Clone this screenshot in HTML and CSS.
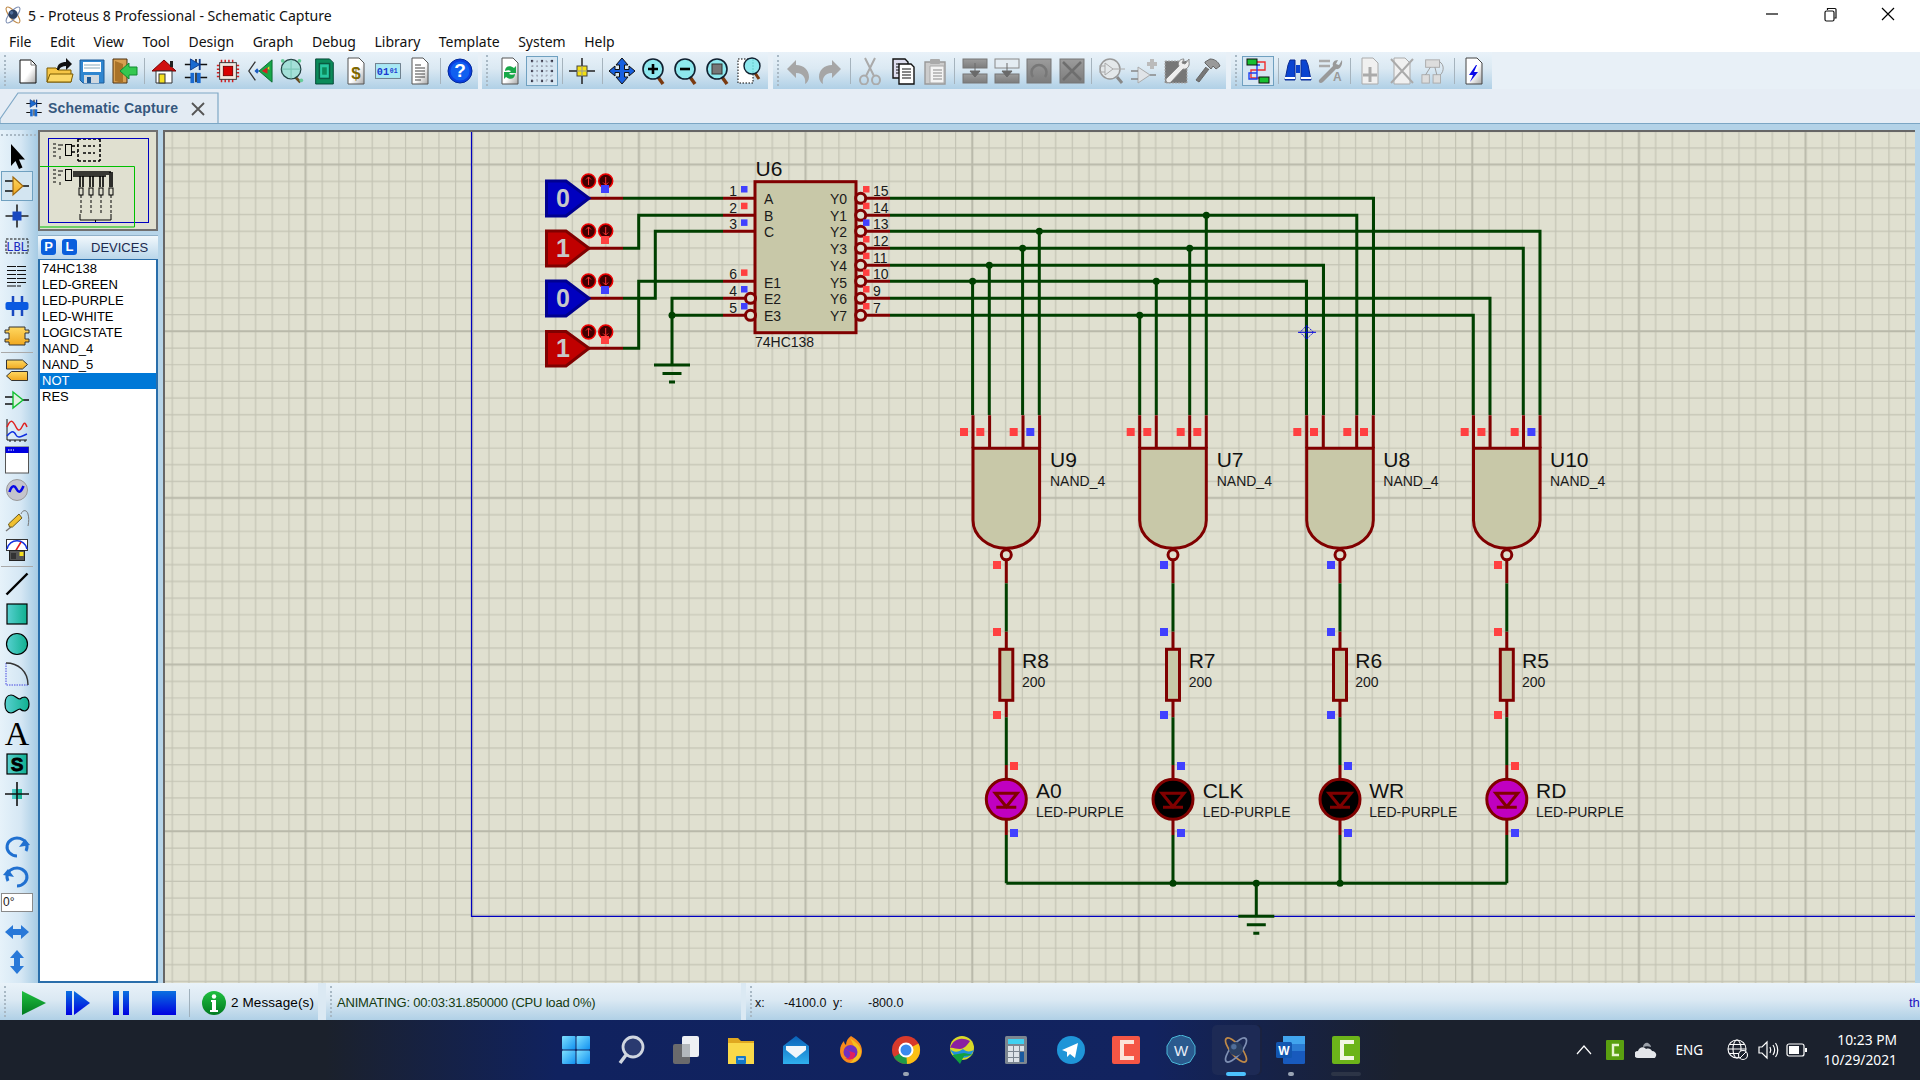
FILE: index.html
```html
<!DOCTYPE html>
<html lang="en">
<head>
<meta charset="utf-8">
<title>5 - Proteus 8 Professional - Schematic Capture</title>
<link rel="stylesheet" href="styles.css">
</head>
<body>
<svg class="defs" width="0" height="0" aria-hidden="true">
  <defs>
    <linearGradient id="docg" x1="0" y1="0" x2="1" y2="1"><stop offset="0.55" stop-color="#fff"/><stop offset="1" stop-color="#a8a8a8"/></linearGradient>
    <linearGradient id="tealg" x1="0" y1="0" x2="1" y2="0"><stop offset="0" stop-color="#58d0d0"/><stop offset="1" stop-color="#10b090"/></linearGradient>
    <linearGradient id="yelg" x1="0" y1="0" x2="0" y2="1"><stop offset="0" stop-color="#ffd860"/><stop offset="1" stop-color="#f0a820"/></linearGradient>
    <linearGradient id="blueg" x1="0" y1="0" x2="0" y2="1"><stop offset="0" stop-color="#0a70e0"/><stop offset="1" stop-color="#0000e0"/></linearGradient>
    <linearGradient id="greeng" x1="0" y1="0" x2="0" y2="1"><stop offset="0" stop-color="#20c040"/><stop offset="1" stop-color="#007a20"/></linearGradient>
    <linearGradient id="grayg" x1="0" y1="0" x2="0" y2="1"><stop offset="0" stop-color="#9c9c9c"/><stop offset="1" stop-color="#7c7c7c"/></linearGradient>
    <linearGradient id="wing" x1="0" y1="0" x2="1" y2="1"><stop offset="0" stop-color="#7fe0ff"/><stop offset="1" stop-color="#1090f0"/></linearGradient>
    <linearGradient id="mailg" x1="0" y1="0" x2="0" y2="1"><stop offset="0" stop-color="#0a62b8"/><stop offset="1" stop-color="#30b0ee"/></linearGradient>
    <symbol id="mag" viewBox="0 0 28 28">
      <path d="M18 20l5 7" stroke="#7a3a10" stroke-width="3.5" fill="none"/>
      <circle cx="13" cy="12" r="10" fill="#8ee8ee" stroke="#102030" stroke-width="1.6"/>
    </symbol>
    <symbol id="schem" viewBox="0 0 28 28">
      <path d="M14 1v8M2 7h8M18 7h8M14 16v10M2 21h8M18 21h8" stroke="#111" stroke-width="1.6" fill="none"/>
      <path d="M8 1l10 6-10 6z" fill="#1a6ad0" stroke="#0a3a90"/>
      <path d="M18 1v12" stroke="#0a3a90" stroke-width="2"/>
      <rect x="8" y="16" width="4" height="11" fill="#1a6ad0"/><rect x="15" y="16" width="4" height="11" fill="#1a6ad0"/>
    </symbol>
    <symbol id="atom" viewBox="0 0 28 28">
      <g fill="none" stroke-width="1.6">
        <ellipse cx="14" cy="14" rx="14" ry="5" transform="rotate(50 14 14)" stroke="#c08a48"/>
        <ellipse cx="14" cy="14" rx="14" ry="5" transform="rotate(-50 14 14)" stroke="#7f90b4"/>
      </g>
      <circle cx="14" cy="13" r="6.5" fill="#2a3e60"/>
      <circle cx="12" cy="11" r="2.5" fill="#506e9a"/>
    </symbol>
  </defs>
</svg>

<div class="app">
  <header class="titlebar">
    <svg class="app-icon" width="20" height="20"><use href="#atom"/></svg>
    <span class="title-text">5 - Proteus 8 Professional - Schematic Capture</span>
    <div class="winctl">
      <svg width="20" height="20" viewBox="0 0 20 20"><path d="M4 10h12" stroke="#000" stroke-width="1.2"/></svg>
      <svg width="20" height="20" viewBox="0 0 20 20"><rect x="5" y="7" width="9" height="10" rx="1.5" fill="none" stroke="#111" stroke-width="1.2"/><path d="M7.5 6V4.5h7.5a1 1 0 0 1 1 1V14h-1.5" fill="none" stroke="#111" stroke-width="1.2"/></svg>
      <svg width="20" height="20" viewBox="0 0 20 20"><path d="M4 4l12 12M16 4L4 16" stroke="#000" stroke-width="1.2"/></svg>
    </div>
  </header>
  <nav class="menubar">
    <span>File</span><span>Edit</span><span>View</span><span>Tool</span><span>Design</span><span>Graph</span><span>Debug</span><span>Library</span><span>Template</span><span>System</span><span>Help</span>
  </nav>

  <div class="toolrow">
    <div class="toolbar tb-a">
      <div class="tb"><svg width="28" height="28" viewBox="0 0 28 28"><path d="M6 3h11l5 5v18H6z" fill="url(#docg)" stroke="#111"/><path d="M17 3v5h5" fill="none" stroke="#777"/></svg></div>
      <div class="tb"><svg width="28" height="28" viewBox="0 0 28 28"><path d="M1 25V11h9l2 2h13v12z" fill="#f6c646" stroke="#7a5a00"/><path d="M1 25l3-8h23l-2 8z" fill="#fbd765" stroke="#7a5a00"/><path d="M11 13c0-6 4-8 9-8V1l6 6-6 6V9c-3 0-6 1-7 4z" fill="#111"/></svg></div>
      <div class="tb"><svg width="28" height="28" viewBox="0 0 28 28"><path d="M2 3h24v23H5l-3-3z" fill="#2f86d0" stroke="#1c5a98"/><rect x="5" y="5" width="18" height="10" fill="#fff"/><path d="M6 8h16M6 11h16" stroke="#8ab" stroke-width="1"/><rect x="6" y="18" width="15" height="8" fill="#cfd8e0"/><rect x="9" y="20" width="4" height="6" fill="#1c5a98"/></svg></div>
      <div class="tb"><svg width="28" height="28" viewBox="0 0 28 28"><path d="M3 2h14v24H3z" fill="#d8a050" stroke="#4c3010"/><path d="M5 4l8 3v19l-8-2z" fill="#a97228"/><path d="M27 10h-8V6l-9 8 9 8v-4h8z" fill="#34c850" stroke="#108a30"/></svg></div>
      <i class="sep"></i>
      <div class="tb"><svg width="28" height="28" viewBox="0 0 28 28"><path d="M2 14L14 3l12 11z" fill="#d01010" stroke="#700"/><rect x="20" y="4" width="3" height="6" fill="#222"/><path d="M6 14h16v12H6z" fill="#fff" stroke="#333"/><rect x="9" y="17" width="6" height="9" fill="#f4e020" stroke="#333"/></svg></div>
      <div class="tb"><svg width="26" height="26"><use href="#schem"/></svg></div>
      <div class="tb"><svg width="26" height="26" viewBox="0 0 28 28"><path d="M7 2v24M11 2v24M15 2v24M19 2v24M2 8h24M2 12h24M2 16h24M2 20h24" stroke="#d02020" stroke-width="1.6"/><rect x="5" y="5" width="18" height="18" fill="#f0e8e0" stroke="#333"/><rect x="9" y="9" width="10" height="10" fill="#d80000" stroke="#700"/></svg></div>
      <div class="tb"><svg width="26" height="26" viewBox="0 0 28 28"><path d="M9 4L2 14l7 10" fill="none" stroke="#333" stroke-width="1.4"/><path d="M8 14l3-3 2 3-2 3z" fill="#1a5ac0"/><path d="M27 2L13 14l14 12z" fill="#18a848" stroke="#0a6a30"/><path d="M22 10l-6 4 6 3z" fill="#d82020"/><path d="M24 9l-2 2 2 2z" fill="#f4e020"/></svg></div>
      <div class="tb"><svg width="26" height="26" viewBox="0 0 28 28"><path d="M18 21l5 5" stroke="#6a4a20" stroke-width="3"/><circle cx="13" cy="12" r="10.500" fill="#a4e0d8" stroke="#204040" stroke-width="1.4"/><path d="M13 2v20M3 12h20" stroke="#7cc8b8" stroke-width="1.2"/><circle cx="22" cy="3" r="2" fill="#6c9"/><circle cx="4" cy="3" r="2" fill="#6c9"/><circle cx="24" cy="24" r="2" fill="#6c9"/></svg></div>
      <div class="tb"><svg width="26" height="28" viewBox="0 0 28 28"><path d="M5 1h15l4 4v23H5z" fill="#0c8a5a" stroke="#043"/><rect x="9" y="6" width="11" height="16" fill="#28c8a0" stroke="#0a5a40" stroke-width="1.6"/><rect x="12" y="10" width="5" height="8" fill="#0c8a5a"/></svg></div>
      <div class="tb"><svg width="28" height="28" viewBox="0 0 28 28"><path d="M6 1h11l5 5v21H6z" fill="url(#docg)" stroke="#555"/><text class="ic-dollar" x="14" y="22" text-anchor="middle">$</text></svg></div>
      <div class="tb"><svg width="26" height="28" viewBox="0 0 28 28"><rect x="0.5" y="6" width="27" height="16" fill="#a8e8f4" stroke="#6a7a88"/><text class="ic-bin" x="2" y="18">01</text><text class="ic-bin-s" x="16" y="16">01</text></svg></div>
      <div class="tb"><svg width="28" height="28" viewBox="0 0 28 28"><path d="M6 1h11l5 5v21H6z" fill="url(#docg)" stroke="#555"/><path d="M9 8h6M9 11h10M9 14h10M9 17h10M9 20h10M9 23h6" stroke="#444" stroke-width="1.2"/></svg></div>
      <i class="sep"></i>
      <div class="tb"><svg width="28" height="28" viewBox="0 0 28 28"><circle cx="14" cy="14" r="12" fill="#0a3ee0" stroke="#002a9a"/><circle cx="14" cy="14" r="9.5" fill="#1060f0"/><text class="ic-help" x="14" y="20" text-anchor="middle">?</text></svg></div>
    </div>
    <div class="toolbar tb-b">
      <div class="tb"><svg width="28" height="28" viewBox="0 0 28 28"><path d="M6 1h11l5 5v21H6z" fill="url(#docg)" stroke="#555"/><path d="M9 14c0-5 5-6 9-3l2-2v7h-7l2-2c-2-1-4-1-6 0zM19 17c0 5-5 6-9 3l-2 2v-7h7l-2 2c2 1 4 1 6 0z" fill="#18a848"/></svg></div>
      <div class="tb on"><svg width="28" height="28" viewBox="0 0 28 28"><g fill="#334"><circle cx="4" cy="4" r="1.2"/><circle cx="14" cy="4" r="1.2"/><circle cx="24" cy="4" r="1.2"/><circle cx="4" cy="14" r="1.2"/><circle cx="14" cy="14" r="1.2"/><circle cx="24" cy="14" r="1.2"/><circle cx="4" cy="24" r="1.2"/><circle cx="14" cy="24" r="1.2"/><circle cx="24" cy="24" r="1.2"/></g><path d="M4 4h20M4 9h20M4 14h20M4 19h20M4 24h20M4 4v20M9 4v20M14 4v20M19 4v20M24 4v20" stroke="#778" stroke-width="0.7" stroke-dasharray="1.5 3"/></svg></div>
      <i class="sep"></i>
      <div class="tb"><svg width="28" height="28" viewBox="0 0 28 28"><path d="M14 1v26M1 14h26" stroke="#222" stroke-width="1.5"/><rect x="9" y="9" width="10" height="10" fill="#f4e010" stroke="#444"/><path d="M9 14h10M14 9v10" stroke="#999"/></svg></div>
      <i class="sep"></i>
      <div class="tb"><svg width="28" height="28" viewBox="0 0 28 28"><path d="M14 1l6 7h-3.500v4.500H21V9l6 5-6 5v-3.500h-4.500V20H20l-6 7-6-7h3.500v-4.500H7V19l-6-5 6-5v3.500h4.500V8H8z" fill="#1860e0" stroke="#111" stroke-width="1"/></svg></div>
      <div class="tb"><svg width="28" height="28"><use href="#mag"/><path d="M8 12h10M13 7v10" stroke="#000" stroke-width="2.6"/></svg></div>
      <div class="tb"><svg width="28" height="28"><use href="#mag"/><path d="M8 12h10" stroke="#000" stroke-width="2.6"/></svg></div>
      <div class="tb"><svg width="28" height="28"><use href="#mag"/><rect x="8" y="7" width="10" height="10" fill="#777" stroke="#333"/></svg></div>
      <div class="tb"><svg width="28" height="28" viewBox="0 0 28 28"><rect x="2" y="2" width="15" height="24" fill="#fff" stroke="#000" stroke-dasharray="1.500 1.500"/><path d="M19 16l4 6" stroke="#7a3a10" stroke-width="3"/><circle cx="16" cy="9" r="8" fill="#8ee8ee" stroke="#102030" stroke-width="1.4"/><path d="M17 2v14" stroke="#6cc" stroke-dasharray="2 1"/></svg></div>
    </div>
    <div class="toolbar tb-c">
      <div class="tb"><svg width="28" height="28" viewBox="0 0 28 28"><path d="M3 12l9-9v5c8 0 13 5 13 12 0 3-2 6-4 7 1-5-1-11-9-11v5z" fill="#a6a6a6"/></svg></div>
      <div class="tb"><svg width="28" height="28" viewBox="0 0 28 28"><path d="M25 12l-9-9v5C8 8 3 13 3 20c0 3 2 6 4 7-1-5 1-11 9-11v5z" fill="#a6a6a6"/></svg></div>
      <i class="sep"></i>
      <div class="tb"><svg width="28" height="28" viewBox="0 0 28 28"><path d="M9 1l9 18M19 1l-9 18" stroke="#aaa" stroke-width="2"/><ellipse cx="8" cy="23" rx="4" ry="4.500" fill="none" stroke="#aaa" stroke-width="2"/><ellipse cx="20" cy="23" rx="4" ry="4.500" fill="none" stroke="#aaa" stroke-width="2"/></svg></div>
      <div class="tb"><svg width="28" height="28" viewBox="0 0 28 28"><path d="M4 2h12l3 3v16H4z" fill="#dde" stroke="#111" stroke-width="1.4"/><path d="M10 7h12l3 3v17H10z" fill="#fff" stroke="#111" stroke-width="1.4"/><path d="M13 12h9M13 15h9M13 18h9M13 21h9" stroke="#111" stroke-width="1.2"/><path d="M7 7h3M7 10h3M7 13h3M7 16h3" stroke="#111"/></svg></div>
      <div class="tb"><svg width="28" height="28" viewBox="0 0 28 28"><path d="M4 5h20v22H4z" fill="#ccc" stroke="#999" stroke-width="1.4"/><rect x="9" y="2" width="10" height="5" rx="1" fill="#aaa"/><path d="M9 9h14v17H9z" fill="#f4f4f4" stroke="#aaa"/><path d="M12 13h9M12 16h9M12 19h9M12 22h9" stroke="#888" stroke-width="1.2"/></svg></div>
      <i class="sep"></i>
      <div class="tb"><svg width="28" height="28" viewBox="0 0 28 28"><rect x="2" y="2" width="24" height="9" fill="url(#grayg)" stroke="#777"/><rect x="2" y="17" width="24" height="9" fill="url(#grayg)" stroke="#777"/><path d="M14 6v12M9 14l5 6 5-6z" fill="#6a6a6a" stroke="#6a6a6a"/></svg></div>
      <div class="tb"><svg width="28" height="28" viewBox="0 0 28 28"><rect x="2" y="2" width="24" height="9" fill="#e4ecf2" stroke="#888"/><rect x="2" y="17" width="24" height="9" fill="url(#grayg)" stroke="#777"/><path d="M14 6v12M9 14l5 6 5-6z" fill="#6a6a6a" stroke="#6a6a6a"/></svg></div>
      <div class="tb"><svg width="28" height="28" viewBox="0 0 28 28"><rect x="2" y="2" width="24" height="24" fill="url(#grayg)" stroke="#777"/><path d="M8 20a7.500 7.500 0 1 1 12 0" fill="none" stroke="#777" stroke-width="2.500"/></svg></div>
      <div class="tb"><svg width="28" height="28" viewBox="0 0 28 28"><rect x="2" y="2" width="24" height="24" fill="url(#grayg)" stroke="#777"/><path d="M5 5l18 18M23 5L5 23" stroke="#6e6e6e" stroke-width="2.500"/></svg></div>
      <i class="sep"></i>
      <div class="tb"><svg width="28" height="28" viewBox="0 0 28 28"><path d="M19 20l5 6" stroke="#888" stroke-width="3"/><circle cx="12" cy="12" r="10" fill="#e4e8ea" stroke="#999" stroke-width="1.500"/><path d="M7 6l8 6-8 6zM1 9h6M1 15h6M15 12h12" fill="none" stroke="#aaa"/></svg></div>
      <div class="tb"><svg width="28" height="28" viewBox="0 0 28 28"><path d="M8 10l12 8-12 8z" fill="#e0e4e8" stroke="#aaa"/><path d="M1 14h7M1 22h7M20 18h6" stroke="#888" stroke-width="1.600"/><path d="M17 7h10M22 2v10" stroke="#bbb" stroke-width="4"/></svg></div>
      <div class="tb"><svg width="28" height="28" viewBox="0 0 28 28"><rect x="3" y="4" width="22" height="22" fill="#777" stroke="#aaa" stroke-dasharray="2 1"/><path d="M27 2l-4 5-3-1 2-4c-4 0-7 3-5 7L4 22c-1 3 3 5 5 3l12-13c4 1 7-3 6-7z" fill="#eee" stroke="#888"/></svg></div>
      <div class="tb"><svg width="28" height="28" viewBox="0 0 28 28"><path d="M15 12L5 25l-3-2 10-13" fill="#777" stroke="#666"/><path d="M11 5l5-3c4 0 8 2 10 7l-4 3-3-3-2 3-6-6z" fill="#999" stroke="#666"/></svg></div>
    </div>
    <div class="toolbar tb-d">
      <div class="tb on"><svg width="28" height="28" viewBox="0 0 28 28"><path d="M12 5h9v8H7v8h9" fill="none" stroke="#f03030" stroke-width="1.400"/><path d="M16 8h-3v14h-8v-6h8" fill="none" stroke="#2040f0" stroke-width="1.400"/><rect x="3" y="2" width="10" height="6" fill="#18c030" stroke="#111"/><rect x="15" y="20" width="10" height="6" fill="#18c030" stroke="#111"/></svg></div>
      <i class="sep"></i>
      <div class="tb"><svg width="28" height="28" viewBox="0 0 28 28"><path d="M4 8l2-5h5v20H1z M24 8l-2-5h-5v20h10z" fill="#0a44d0" stroke="#0a2a90"/><rect x="1" y="20" width="10" height="2" fill="#fff"/><rect x="17" y="20" width="10" height="2" fill="#fff"/><rect x="12" y="8" width="4" height="8" fill="#0a44d0"/></svg></div>
      <div class="tb"><svg width="28" height="28" viewBox="0 0 28 28"><path d="M3 4h11M3 9h11" stroke="#aaa" stroke-width="2.500"/><path d="M26 3l-3 5-3-1 2-4c-4 0-6 3-5 6L3 23c-1 3 2 4 4 2L20 12c3 1 7-3 6-9z" fill="#999"/><text class="ic-a" x="17" y="24">A</text></svg></div>
      <i class="sep"></i>
      <div class="tb"><svg width="28" height="28" viewBox="0 0 28 28"><path d="M6 1h11l5 5v21H6z" fill="#f0f0f0" stroke="#aaa"/><path d="M14 10v15M7 18h14" stroke="#aaa" stroke-width="3"/></svg></div>
      <div class="tb"><svg width="28" height="28" viewBox="0 0 28 28"><path d="M6 1h11l5 5v21H6z" fill="#f0f0f0" stroke="#aaa"/><path d="M3 2l22 24M25 2L3 26" stroke="#aaa" stroke-width="2"/></svg></div>
      <div class="tb"><svg width="26" height="28" viewBox="0 0 28 28"><rect x="5" y="2" width="15" height="8" fill="#ddd" stroke="#aaa"/><rect x="1" y="18" width="8" height="9" fill="#ddd" stroke="#aaa"/><rect x="13" y="18" width="8" height="9" fill="#ddd" stroke="#aaa"/><path d="M10 10l-5 8M15 10l2 8M20 4c5 3 5 10 1 14" fill="none" stroke="#999"/></svg></div>
      <i class="sep"></i>
      <div class="tb"><svg width="28" height="28" viewBox="0 0 28 28"><path d="M6 1h11l5 5v21H6z" fill="url(#docg)" stroke="#444"/><path d="M16 8l-7 10h4l-3 7 8-10h-4l3-7z" fill="#0808e8"/></svg></div>
    </div>
  </div>

  <div class="tabstrip">
    <div class="tab">
      <svg class="tab-shape" width="220" height="32" viewBox="0 0 220 32"><path d="M0 31V27L18 1H218V31" fill="#e3ebf3" stroke="#7fa8c6" stroke-width="1.200"/></svg>
      <svg class="tab-icon" width="18" height="22"><use href="#schem"/></svg>
      <span class="tab-text">Schematic Capture</span>
      <svg class="tab-x" width="16" height="16" viewBox="0 0 16 16"><path d="M2 2l12 12M14 2L2 14" stroke="#555" stroke-width="1.800"/></svg>
    </div>
  </div>
  <div class="tabline"></div>

  <main class="workspace">
    <aside class="tools">
      <div class="tool"><svg width="30" height="30" viewBox="0 0 30 30"><path d="M9 3v22l4.500-5 3.500 8 3.500-1.500-3.500-8h6z" fill="#000"/></svg></div>
      <div class="tool on"><svg width="30" height="30" viewBox="0 0 30 30"><path d="M3 10h8M3 20h8M21 15h6" stroke="#111" stroke-width="1.400"/><path d="M11 6l10 9-10 9z" fill="url(#yelg)" stroke="#a06810" stroke-width="1.200"/></svg></div>
      <div class="tool"><svg width="30" height="30" viewBox="0 0 30 30"><path d="M15 3.500v23M3.500 15h23" stroke="#222" stroke-width="1.600"/><rect x="10.500" y="10.500" width="9" height="9" fill="#1848c0"/></svg></div>
      <div class="tool"><svg width="30" height="30" viewBox="0 0 30 30"><rect x="4" y="8" width="22" height="14" fill="none" stroke="#111" stroke-dasharray="2.500 1.500"/><text class="ic-lbl" x="15" y="19.500" text-anchor="middle">LBL</text></svg></div>
      <div class="tool"><svg width="30" height="30" viewBox="0 0 30 30"><path d="M5 5.500h20M5 9.500h20M5 13.500h20M5 17.500h20M5 21.500h20M5 25h14" stroke="#111" stroke-width="1.200" stroke-dasharray="9 1"/></svg></div>
      <div class="tool"><svg width="30" height="30" viewBox="0 0 30 30"><path d="M11 5v6M20 5v6M11 19v6M20 19v6" stroke="#1848c0" stroke-width="2.500"/><rect x="3.500" y="11" width="23" height="8" rx="2" fill="#0a5ae0"/></svg></div>
      <div class="tool"><svg width="30" height="30" viewBox="0 0 30 30"><path d="M7 6h16v3h4v3h-4v6h4v3h-4v3H7v-3H3v-3h4v-6H3V9h4z" fill="url(#yelg)" stroke="#333"/></svg></div>
      <hr class="tool-sep">
      <div class="tool"><svg width="30" height="30" viewBox="0 0 30 30"><path d="M4.500 5h16l5 4.500-5 4.500h-16z" fill="url(#yelg)" stroke="#333"/><path d="M25.500 16.500h-16l-5 4.500 5 4.500h16z" fill="url(#yelg)" stroke="#333"/></svg></div>
      <div class="tool"><svg width="30" height="30" viewBox="0 0 30 30"><path d="M3 12h8M3 19h8M20 15h7" stroke="#111" stroke-width="1.400"/><path d="M11 7l10 8-10 8z" fill="#dff0e0" stroke="#10c030" stroke-width="1.400"/></svg></div>
      <div class="tool"><svg width="30" height="30" viewBox="0 0 30 30"><path d="M5 4v21h20M8 25v2M13 25v2M18 25v2M23 25v2" stroke="#111" fill="none"/><path d="M5 12c4-9 6-6 9 0s5 2 7-2 3 0 4 2" stroke="#e02020" fill="none" stroke-width="1.500"/><path d="M5 21c5-6 7-5 9-1s6 1 11-1" stroke="#1030e0" fill="none" stroke-width="1.500"/></svg></div>
      <div class="tool"><svg width="30" height="30" viewBox="0 0 30 30"><rect x="3.500" y="2" width="23" height="26" fill="#fff" stroke="#555"/><rect x="3.500" y="2" width="23" height="6" fill="#0000e0"/><path d="M6 5h6" stroke="#fff" stroke-dasharray="1.500 1"/></svg></div>
      <div class="tool"><svg width="30" height="30" viewBox="0 0 30 30"><circle cx="15" cy="15" r="10.500" fill="#c4c4cc" stroke="#999"/><path d="M7.500 17c2-7 5-7 7-3s4 4 7-3" fill="none" stroke="#0808e8" stroke-width="2.600"/></svg></div>
      <div class="tool"><svg width="30" height="30" viewBox="0 0 30 30"><path d="M4 26l5-4" stroke="#777" stroke-width="1.500"/><path d="M7.500 22l-1-3L17 9l3 4-9.500 9z" fill="#f0c030" stroke="#6a5a20"/><path d="M19 9c2-5 6-4 7 0s1 7 0 12" fill="none" stroke="#777"/></svg></div>
      <div class="tool"><svg width="30" height="30" viewBox="0 0 30 30"><rect x="4.500" y="4.500" width="21" height="11" fill="#fff" stroke="#333"/><path d="M5 14c2-11 18-11 20 0" fill="none" stroke="#1030e0" stroke-width="1.500"/><path d="M13 17l6-10" stroke="#e02020" stroke-width="1.500"/><rect x="7.500" y="15.500" width="15" height="10" fill="#555" stroke="#222"/><rect x="9" y="18" width="5" height="6" fill="#333"/><rect x="17.500" y="17" width="4" height="4" fill="#f4e020"/></svg></div>
      <hr class="tool-sep">
      <div class="tool"><svg width="30" height="30" viewBox="0 0 30 30"><path d="M4.500 25.500L25.500 4.500" stroke="#000" stroke-width="2.400"/></svg></div>
      <div class="tool"><svg width="30" height="30" viewBox="0 0 30 30"><rect x="5" y="5" width="20" height="20" fill="url(#tealg)" stroke="#000" stroke-width="1.200"/></svg></div>
      <div class="tool"><svg width="30" height="30" viewBox="0 0 30 30"><circle cx="15" cy="15" r="10.500" fill="url(#tealg)" stroke="#000" stroke-width="1.200"/></svg></div>
      <div class="tool"><svg width="30" height="30" viewBox="0 0 30 30"><path d="M4 4v22h22" fill="none" stroke="#4848e0" stroke-dasharray="1.500 1"/><path d="M4 4c12 0 22 8 22 22" fill="none" stroke="#333" stroke-width="1.400"/></svg></div>
      <div class="tool"><svg width="30" height="30" viewBox="0 0 30 30"><path d="M9 6c4 0 6 4 9 4 2-2 3-2 5-2 3 1 4 4 4 7s-1 6-4 7c-2 0-3 0-5-2-3 0-5 4-9 4s-6-4-6-9 2-9 6-9z" fill="url(#tealg)" stroke="#000" stroke-width="1.200"/></svg></div>
      <div class="tool"><span class="tool-a">A</span></div>
      <div class="tool"><svg width="30" height="30" viewBox="0 0 30 30"><rect x="5" y="5" width="20" height="20" fill="url(#tealg)" stroke="#000" stroke-width="1.200"/><text class="ic-s" x="15" y="22" text-anchor="middle">S</text></svg></div>
      <div class="tool"><svg width="30" height="30" viewBox="0 0 30 30"><rect x="10" y="10" width="10" height="10" fill="url(#tealg)"/><path d="M15 3v24M3 15h24" stroke="#111" stroke-width="1.600"/></svg></div>
      <div class="tool tool-gap"><svg width="30" height="30" viewBox="0 0 30 30"><path d="M24 20a10 9 0 1 0-9 5" fill="none" stroke="#2070d0" stroke-width="3"/><path d="M18 10l5 6 6-8z" fill="#2070d0" transform="rotate(180 23 12)"/></svg></div>
      <div class="tool"><svg width="30" height="30" viewBox="0 0 30 30"><path d="M6 20a10 9 0 1 1 9 5" fill="none" stroke="#2070d0" stroke-width="3"/><path d="M2 8l6 8 5-6z" fill="#2070d0" transform="rotate(180 7 12)"/></svg></div>
      <div class="angle">0°</div>
      <div class="tool"><svg width="30" height="30" viewBox="0 0 30 30"><path d="M3 15l8-7v4h8V8l8 7-8 7v-4h-8v4z" fill="#2878d8"/></svg></div>
      <div class="tool"><svg width="30" height="30" viewBox="0 0 30 30"><path d="M15 3l7 8h-4v8h4l-7 8-7-8h4v-8H8z" fill="#2878d8"/></svg></div>
    </aside>

    <div class="sidepanel">
      <div class="overview">
        <svg width="116" height="97" viewBox="40 132 116 97">
          <g class="ov-ink">
            <path d="M53 144h3M53 148h3M53 152h3M53 156h3M58 145h5M58 149h3M60 156v3"/>
            <path class="thick dash" d="M78 139h22M78 161h22M78 139v22M100 139v22"/>
            <rect x="65.500" y="144.500" width="6" height="11"/>
            <path class="thick dash" d="M83 146h12M83 153h12M72 146h6M72 152h6"/>
            <path d="M53 170h3M53 174h3M53 178h3M53 182h3M58 171h5M58 175h3M60 182v3"/>
            <rect x="65.500" y="169.500" width="6" height="11"/>
            <path class="thick" d="M73 172h38M73 174h36M73 176h33M80 176v11M83 176v11M90 176v11M93 176v11M100 176v11M103 176v11M110 172v15M112 172v15"/>
            <rect x="79" y="188" width="4" height="7"/><rect x="89" y="188" width="4" height="7"/><rect x="99" y="188" width="4" height="7"/><rect x="109" y="188" width="4" height="7"/>
            <path class="dash" d="M81 195v19M91 195v19M101 195v19M111 195v19"/>
            <path d="M80 214v6h31v-6M95.500 220v2"/>
          </g>
          <rect class="ov-blue" x="48.500" y="138.500" width="100" height="84"/>
          <path class="ov-green" d="M40 166.500H134.500V227H40"/>
        </svg>
      </div>
      <div class="devhead">
        <span class="pill">P</span><span class="pill">L</span><span class="devtitle">DEVICES</span>
      </div>
      <ul class="devlist">
        <li>74HC138</li><li>LED-GREEN</li><li>LED-PURPLE</li><li>LED-WHITE</li><li>LOGICSTATE</li><li>NAND_4</li><li>NAND_5</li><li class="sel">NOT</li><li>RES</li>
      </ul>
    </div>

    <div class="canvas-wrap">
      <svg class="canvas" viewBox="165 132 1750 851" width="1750" height="851">
        <defs>
          <pattern id="grid" patternUnits="userSpaceOnUse" x="130.620" y="-10.300" width="166.670" height="166.670">
            <path d="M8.330 0V166.670M25 0V166.670M41.670 0V166.670M58.330 0V166.670M75 0V166.670M91.670 0V166.670M108.330 0V166.670M125 0V166.670M141.670 0V166.670M158.330 0V166.670M0 8.330H166.670M0 25H166.670M0 41.670H166.670M0 58.330H166.670M0 75H166.670M0 91.670H166.670M0 108.330H166.670M0 125H166.670M0 141.670H166.670M0 158.330H166.670" stroke="#c3c3b4" stroke-width="1.200" fill="none"/>
            <path d="M8.330 0V166.670M0 8.330H166.670" stroke="#b9b9aa" stroke-width="2" fill="none"/>
          </pattern>
          <g id="gate">
            <path class="pin" d="M-33.300 -33V0M-16.700 -33V0M16.700 -33V0M33.300 -33V0M0 111.500V135"/>
            <path class="wire" d="M0 135V183.400"/>
            <path class="pin" d="M0 183.400V201M0 252V269"/>
            <path class="body" d="M-33.300 0H33.300V72A33.300 28 0 0 1 -33.300 72Z"/>
            <circle class="bubble" cx="0" cy="106.500" r="5"/>
            <rect class="res" x="-6.500" y="201" width="13" height="51"/>
            <path class="wire" d="M0 269V316.700M0 386.700V435"/>
            <path class="pin" d="M0 316.700V386.700"/>
          </g>
          <g id="diode">
            <path class="diode" d="M-11 -6H11L0 7.500ZM-10 8H10"/>
          </g>
          <g id="gnd">
            <path class="wire" d="M-18 0H18M-9.500 8.500H9.500M-3 17H3"/>
          </g>
          <g id="toggles">
            <circle class="tog" cx="588.500" cy="0" r="7"/>
            <path class="togarr" d="M588.500 4V-4M586 -1.500L588.500 -4L591 -1.500"/>
            <circle class="tog" cx="605.700" cy="0" r="7"/>
            <path class="togarr" d="M605.700 -4V4M603.200 1.500L605.700 4L608.200 1.500"/>
          </g>
        </defs>
        <rect x="165" y="132" width="1750" height="851" fill="#e0e0d0"/>
        <rect x="165" y="132" width="1750" height="851" fill="url(#grid)"/>
        <path class="frame" d="M471.500 132V916.300H1915"/>

        <!-- input wires -->
        <path class="wire" d="M623 198.300H723M623 248.300H638.700V215.300H723M623 298.300H655.300V231.300H723M623 348.300H638.700V281.300H723M723 298.300H672V365M672 315.300H723"/>
        <path class="pin" d="M589 198.300H623M589 248.300H623M589 298.300H623M589 348.300H623M723 198.300H755M723 215.300H755M723 231.300H755M723 281.300H755M723 298.300H745M723 315.300H745"/>
        <use href="#gnd" x="672" y="365"/>
        <circle class="node" cx="672" cy="315.300" r="3.500"/>

        <!-- output wires -->
        <path class="wire" d="M890 198.300H1373.500V415M890 215.300H1356.800V415M890 231.300H1540V415M890 248.300H1523.300V415M890 265.300H1323.500V415M890 281.300H1306.500V415M890 298.300H1490V415M890 315.300H1473.300V415M972.600 281.300V415M989.300 265.300V415M1022.600 248.300V415M1039.300 231.300V415M1139.700 315.300V415M1156.300 281.300V415M1189.700 248.300V415M1206.300 215.300V415"/>
        <path class="pin" d="M866 198.300H890M866 215.300H890M866 231.300H890M866 248.300H890M866 265.300H890M866 281.300H890M866 298.300H890M866 315.300H890"/>
        <g class="nodes">
          <circle class="node" cx="972.600" cy="281.300" r="3.500"/><circle class="node" cx="989.300" cy="265.300" r="3.500"/><circle class="node" cx="1022.600" cy="248.300" r="3.500"/><circle class="node" cx="1039.300" cy="231.300" r="3.500"/>
          <circle class="node" cx="1139.700" cy="315.300" r="3.500"/><circle class="node" cx="1156.300" cy="281.300" r="3.500"/><circle class="node" cx="1189.700" cy="248.300" r="3.500"/><circle class="node" cx="1206.300" cy="215.300" r="3.500"/>
        </g>

        <!-- U6 -->
        <rect class="body" x="755" y="181.700" width="101" height="151"/>
        <circle class="bubble" cx="750.500" cy="298.300" r="5"/><circle class="bubble" cx="750.500" cy="315.300" r="5"/>
        <circle class="bubble" cx="860.700" cy="198.300" r="5"/><circle class="bubble" cx="860.700" cy="215.300" r="5"/><circle class="bubble" cx="860.700" cy="231.300" r="5"/><circle class="bubble" cx="860.700" cy="248.300" r="5"/><circle class="bubble" cx="860.700" cy="265.300" r="5"/><circle class="bubble" cx="860.700" cy="281.300" r="5"/><circle class="bubble" cx="860.700" cy="298.300" r="5"/><circle class="bubble" cx="860.700" cy="315.300" r="5"/>
        <text class="lbl-big" x="755.500" y="176">U6</text>
        <text class="lbl" x="755" y="347">74HC138</text>
        <g class="lbl">
          <text x="764" y="204">A</text><text x="764" y="221">B</text><text x="764" y="237">C</text><text x="764" y="287.700">E1</text><text x="764" y="304">E2</text><text x="764" y="320.700">E3</text>
        </g>
        <g class="lbl end">
          <text x="847" y="204">Y0</text><text x="847" y="221">Y1</text><text x="847" y="237">Y2</text><text x="847" y="254">Y3</text><text x="847" y="271">Y4</text><text x="847" y="287.700">Y5</text><text x="847" y="304">Y6</text><text x="847" y="320.700">Y7</text>
          <text x="737" y="196">1</text><text x="737" y="213">2</text><text x="737" y="229">3</text><text x="737" y="279">6</text><text x="737" y="296">4</text><text x="737" y="313">5</text>
        </g>
        <g class="lbl">
          <text x="873" y="196">15</text><text x="873" y="213">14</text><text x="873" y="229">13</text><text x="873" y="246">12</text><text x="873" y="263">11</text><text x="873" y="279">10</text><text x="873" y="296">9</text><text x="873" y="313">7</text>
        </g>
        <g class="tp">
          <rect class="b" x="741" y="186" width="6.500" height="6.500"/><rect class="r" x="741" y="202.700" width="6.500" height="6.500"/><rect class="b" x="741" y="219.400" width="6.500" height="6.500"/><rect class="r" x="741" y="269.400" width="6.500" height="6.500"/><rect class="b" x="741" y="286" width="6.500" height="6.500"/><rect class="b" x="741" y="303" width="6.500" height="6.500"/>
          <rect class="r" x="863" y="186" width="6.500" height="6.500"/><rect class="r" x="863" y="202.700" width="6.500" height="6.500"/><rect class="b" x="863" y="219.400" width="6.500" height="6.500"/><rect class="r" x="863" y="236" width="6.500" height="6.500"/><rect class="r" x="863" y="252.700" width="6.500" height="6.500"/><rect class="r" x="863" y="269.400" width="6.500" height="6.500"/><rect class="r" x="863" y="286" width="6.500" height="6.500"/><rect class="r" x="863" y="303" width="6.500" height="6.500"/>
        </g>

        <!-- Logic states -->
        <path class="ls-b" d="M546.500 181H566L589 198.300L566 216H546.500Z"/>
        <path class="ls-r" d="M546.500 231H566L589 248.300L566 266H546.500Z"/>
        <path class="ls-b" d="M546.500 281H566L589 298.300L566 316H546.500Z"/>
        <path class="ls-r" d="M546.500 331.500H566L589 348.300L566 366H546.500Z"/>
        <g class="ls-t">
          <text x="563" y="207">0</text><text x="563" y="257">1</text><text x="563" y="307">0</text><text x="563" y="357">1</text>
        </g>
        <use href="#toggles" y="181"/><use href="#toggles" y="231"/><use href="#toggles" y="281"/><use href="#toggles" y="332"/>
        <g class="tp">
          <rect class="b" x="601" y="185" width="8" height="8"/><rect class="r" x="601" y="236" width="8" height="8"/><rect class="b" x="601" y="286" width="8" height="8"/><rect class="r" x="601" y="336" width="8" height="8"/>
        </g>

        <!-- gates -->
        <use href="#gate" x="1006.300" y="448.300"/>
        <use href="#gate" x="1173" y="448.300"/>
        <use href="#gate" x="1340" y="448.300"/>
        <use href="#gate" x="1506.800" y="448.300"/>

        <circle class="led-on" cx="1006.300" cy="799.300" r="20"/><use href="#diode" x="1006.300" y="799.300"/>
        <circle class="led-off" cx="1173" cy="799.300" r="20"/><use href="#diode" x="1173" y="799.300"/>
        <circle class="led-off" cx="1340" cy="799.300" r="20"/><use href="#diode" x="1340" y="799.300"/>
        <circle class="led-on" cx="1506.800" cy="799.300" r="20"/><use href="#diode" x="1506.800" y="799.300"/>

        <path class="wire" d="M1006.300 883.300H1506.800M1256.300 883.300V916.300"/>
        <use href="#gnd" x="1256.300" y="916.300"/>
        <circle class="node" cx="1173" cy="883.300" r="3.500"/><circle class="node" cx="1340" cy="883.300" r="3.500"/><circle class="node" cx="1256.300" cy="883.300" r="3.500"/>

        <g class="lbl-big">
          <text x="1050" y="467">U9</text><text x="1216.700" y="467">U7</text><text x="1383.300" y="467">U8</text><text x="1550" y="467">U10</text>
          <text x="1022" y="668">R8</text><text x="1188.700" y="668">R7</text><text x="1355.300" y="668">R6</text><text x="1522" y="668">R5</text>
          <text x="1036" y="798">A0</text><text x="1202.700" y="798">CLK</text><text x="1369.300" y="798">WR</text><text x="1536" y="798">RD</text>
        </g>
        <g class="lbl">
          <text x="1050" y="486">NAND_4</text><text x="1216.700" y="486">NAND_4</text><text x="1383.300" y="486">NAND_4</text><text x="1550" y="486">NAND_4</text>
          <text x="1022" y="687">200</text><text x="1188.700" y="687">200</text><text x="1355.300" y="687">200</text><text x="1522" y="687">200</text>
          <text x="1036" y="817">LED-PURPLE</text><text x="1202.700" y="817">LED-PURPLE</text><text x="1369.300" y="817">LED-PURPLE</text><text x="1536" y="817">LED-PURPLE</text>
        </g>
        <g class="tp">
          <rect class="r" x="960" y="428" width="8" height="8"/><rect class="r" x="976.300" y="428" width="8" height="8"/><rect class="r" x="1009.700" y="428" width="8" height="8"/><rect class="b" x="1026.300" y="428" width="8" height="8"/>
          <rect class="r" x="1126.700" y="428" width="8" height="8"/><rect class="r" x="1143.300" y="428" width="8" height="8"/><rect class="r" x="1176.700" y="428" width="8" height="8"/><rect class="r" x="1193.300" y="428" width="8" height="8"/>
          <rect class="r" x="1293.300" y="428" width="8" height="8"/><rect class="r" x="1310" y="428" width="8" height="8"/><rect class="r" x="1343.300" y="428" width="8" height="8"/><rect class="r" x="1360" y="428" width="8" height="8"/>
          <rect class="r" x="1460.700" y="428" width="8" height="8"/><rect class="r" x="1477.400" y="428" width="8" height="8"/><rect class="r" x="1510.700" y="428" width="8" height="8"/><rect class="b" x="1527.400" y="428" width="8" height="8"/>

          <rect class="r" x="993" y="561" width="8" height="8"/><rect class="b" x="1160" y="561" width="8" height="8"/><rect class="b" x="1327" y="561" width="8" height="8"/><rect class="r" x="1494" y="561" width="8" height="8"/>
          <rect class="r" x="993" y="628" width="8" height="8"/><rect class="b" x="1160" y="628" width="8" height="8"/><rect class="b" x="1327" y="628" width="8" height="8"/><rect class="r" x="1494" y="628" width="8" height="8"/>
          <rect class="r" x="993" y="711" width="8" height="8"/><rect class="b" x="1160" y="711" width="8" height="8"/><rect class="b" x="1327" y="711" width="8" height="8"/><rect class="r" x="1494" y="711" width="8" height="8"/>

          <rect class="r" x="1010" y="762" width="8" height="8"/><rect class="b" x="1177" y="762" width="8" height="8"/><rect class="b" x="1344" y="762" width="8" height="8"/><rect class="r" x="1511" y="762" width="8" height="8"/>
          <rect class="b" x="1010" y="829" width="8" height="8"/><rect class="b" x="1177" y="829" width="8" height="8"/><rect class="b" x="1344" y="829" width="8" height="8"/><rect class="b" x="1511" y="829" width="8" height="8"/>
        </g>
        <path class="cursor-d" d="M1306.700 325.500L1313.500 332.300L1306.700 339L1300 332.300Z"/>
        <path class="cursor-c" d="M1298 332.300H1316M1306.700 325.500V339"/>
      </svg>
    </div>
  </main>

  <footer class="statusbar">
    <div class="stat-seg seg-play">
      <svg width="26" height="26" viewBox="0 0 26 26"><path d="M1 1l24 12L1 25z" fill="url(#greeng)"/></svg>
      <svg width="26" height="26" viewBox="0 0 26 26"><rect x="1" y="1" width="6" height="24" fill="url(#blueg)"/><path d="M9 1l16 12L9 25z" fill="url(#blueg)"/></svg>
      <svg width="18" height="26" viewBox="0 0 18 26"><rect x="1" y="1" width="6" height="24" fill="url(#blueg)"/><rect x="11" y="1" width="6" height="24" fill="url(#blueg)"/></svg>
      <svg width="24" height="26" viewBox="0 0 24 26"><rect x="0" y="1" width="24" height="24" fill="url(#blueg)"/></svg>
      <i class="stat-sep"></i>
      <svg width="24" height="26" viewBox="0 0 24 26"><circle cx="12" cy="13" r="12" fill="url(#greeng)"/><circle cx="12" cy="6.500" r="2.200" fill="#fff"/><path d="M9 10h5v10h2v2H8v-2h2v-8H9z" fill="#fff"/></svg>
      <span class="msgs">2 Message(s)</span>
    </div>
    <div class="stat-seg seg-anim"><span class="anim">ANIMATING: 00:03:31.850000 (CPU load 0%)</span></div>
    <div class="stat-seg seg-coord">
      <span class="c-x">x:</span><span class="c-xv">-4100.0</span><span class="c-y">y:</span><span class="c-yv">-800.0</span><span class="c-th">th</span>
    </div>
  </footer>

  <div class="taskbar">
    <div class="task-icons">
      <div class="ti"><svg width="30" height="30" viewBox="0 0 30 30"><rect x="1" y="1" width="13.500" height="13.500" rx="1" fill="url(#wing)"/><rect x="15.500" y="1" width="13.500" height="13.500" rx="1" fill="url(#wing)"/><rect x="1" y="15.500" width="13.500" height="13.500" rx="1" fill="url(#wing)"/><rect x="15.500" y="15.500" width="13.500" height="13.500" rx="1" fill="url(#wing)"/></svg></div>
      <div class="ti"><svg width="30" height="30" viewBox="0 0 30 30"><circle cx="17" cy="12" r="10" fill="#2a3a70" stroke="#d0d6e0" stroke-width="2.800"/><path d="M10 20l-6 8" stroke="#d0d6e0" stroke-width="3.500"/></svg></div>
      <div class="ti"><svg width="30" height="30" viewBox="0 0 30 30"><rect x="11" y="1" width="17" height="21" rx="2" fill="#eef0f4"/><rect x="2" y="9" width="17" height="20" rx="2" fill="#6a6a6c"/><rect x="11" y="9" width="8" height="13" fill="#b4b8bc"/></svg></div>
      <div class="ti"><svg width="30" height="30" viewBox="0 0 30 30"><path d="M2 3h10l3 3h13v23H2z" fill="#e0a820"/><rect x="2" y="8" width="26" height="21" fill="#fad94a"/><rect x="10" y="21" width="10" height="8" rx="1" fill="#1478c8"/><path d="M12 24h6" stroke="#fff"/></svg></div>
      <div class="ti"><svg width="30" height="30" viewBox="0 0 30 30"><path d="M15 1L28 11v18H2V11z" fill="url(#mailg)"/><path d="M5 11h20v4l-10 8-10-8z" fill="#f0f6fa"/></svg></div>
      <div class="ti"><svg width="30" height="30" viewBox="0 0 30 30"><path d="M15 1c5 3 11 7 11 15a11 12 0 0 1-22 0c0-5 2-8 4-10 0 2 1 3 2 4 0-4 2-7 5-9z" fill="#f88a1c"/><path d="M14 3c3 3 11 6 11 14 0 7-6 11-11 11 8-6 6-14 0-25z" fill="#f4c020"/><circle cx="14.500" cy="17" r="7" fill="#7030c0"/><path d="M8 14c3 0 5 1 6 4 1 4-2 6-5 5 5 4 11 0 10-5" fill="#e02060"/></svg></div>
      <div class="ti ti-run"><svg width="30" height="30" viewBox="0 0 30 30"><circle cx="15" cy="15" r="14" fill="#d83a2c"/><path d="M15 15L2.900 22A14 14 0 0 0 20 28z" fill="#1f9a48"/><path d="M15 15L27.500 8.600A14 14 0 0 1 16 29z" fill="#fbc015"/><circle cx="15" cy="15" r="6.500" fill="#3a8aee" stroke="#fff" stroke-width="2"/></svg></div>
      <div class="ti"><svg width="30" height="30" viewBox="0 0 30 30"><circle cx="16" cy="13" r="12" fill="#d8d828"/><path d="M4 13c3-8 10-12 20-7-3 5-7 8-10 8-5 0-7-2-10-1z" fill="#8a20a0"/><path d="M4 14c4 4 9 3 13 0 3 3 7 3 11 1-2 5-6 8-12 8-6 0-10-4-12-9z" fill="#2090e0"/><path d="M6 20l8 9 4-8 10-1-10-2z" fill="#12a040"/></svg></div>
      <div class="ti"><svg width="30" height="30" viewBox="0 0 30 30"><rect x="4" y="1" width="22" height="28" rx="1.500" fill="#7c8690"/><rect x="7" y="4" width="16" height="5" fill="#3fd0f0"/><g fill="#dde3e8"><rect x="7" y="11" width="5" height="5"/><rect x="13" y="11" width="5" height="5"/><rect x="7" y="17" width="5" height="5"/><rect x="13" y="17" width="5" height="5"/><rect x="7" y="23" width="5" height="4"/><rect x="13" y="23" width="5" height="4"/></g><rect x="19" y="17" width="4" height="10" fill="#1a5aa0"/><g fill="#dde3e8"><rect x="19" y="11" width="4" height="5"/></g></svg></div>
      <div class="ti"><svg width="30" height="30" viewBox="0 0 30 30"><circle cx="15" cy="15" r="14" fill="#1f95d8"/><path d="M6 15L22 8l-3 15-5-4-3 3v-5z" fill="#fff"/></svg></div>
      <div class="ti"><svg width="30" height="30" viewBox="0 0 30 30"><rect x="1" y="1" width="28" height="28" rx="2" fill="#f55645"/><path d="M23 7H11v16h12" fill="none" stroke="#fce3d8" stroke-width="4"/></svg></div>
      <div class="ti"><svg width="30" height="30" viewBox="0 0 30 30"><path d="M15 0l9 3 5 8v8l-5 8-9 3-9-3-5-8v-8l5-8z" fill="#2a5a8e" stroke="#4ab8d8"/><text class="ic-w" x="15" y="21" text-anchor="middle">W</text></svg></div>
      <div class="ti ti-act"><svg width="32" height="32"><use href="#atom"/></svg></div>
      <div class="ti ti-run"><svg width="30" height="30" viewBox="0 0 30 30"><rect x="7" y="1" width="22" height="28" rx="1.500" fill="#185abd"/><rect x="7" y="9" width="22" height="7" fill="#2b7cd3"/><rect x="7" y="1" width="22" height="8" fill="#41a5ee"/><rect x="0" y="7" width="16" height="16" rx="1.500" fill="#1256b0"/><text class="ic-word" x="8" y="20" text-anchor="middle">W</text></svg></div>
      <div class="ti ti-dim"><svg width="30" height="30" viewBox="0 0 30 30"><rect x="1" y="1" width="28" height="28" rx="2" fill="#6cb41a"/><path d="M23 7H11v16h12" fill="none" stroke="#f2f6e4" stroke-width="4"/></svg></div>
    </div>
    <div class="tray">
      <svg class="tr-chev" width="16" height="16" viewBox="0 0 16 16"><path d="M1 12l7-8 7 8" fill="none" stroke="#fff" stroke-width="1.200"/></svg>
      <svg class="tr-c" width="18" height="20" viewBox="0 0 18 20"><rect x="0" y="0" width="18" height="20" rx="1" fill="#5aa010"/><path d="M13 5H7v10h6" fill="none" stroke="#e8f4d0" stroke-width="2.400"/></svg>
      <svg class="tr-cloud" width="22" height="18" viewBox="0 0 22 18"><path d="M3 17a3 3 0 0 1 0-7c1-4 6-5 8-2 3-1 5 0 6 2 3 0 5 3 4 5s-1 2-2 2z" fill="#e4e6ea"/><path d="M8 6c0-3 3-5 5-4s3 3 3 4c-3-1-5-1-8 0z" fill="#9aa0a8"/></svg>
      <span class="tr-eng">ENG</span>
      <svg class="tr-globe" width="22" height="22" viewBox="0 0 22 22"><g fill="none" stroke="#fff" stroke-width="1.100"><circle cx="10" cy="10" r="9"/><ellipse cx="10" cy="10" rx="4" ry="9"/><path d="M1 10h18M2.500 5.500h15M2.500 14.500h15"/></g><circle cx="16" cy="16" r="4.500" fill="#1b212d" stroke="#fff" stroke-width="1.100"/><path d="M13 19l6-6" stroke="#fff"/></svg>
      <svg class="tr-spk" width="22" height="22" viewBox="0 0 22 22"><path d="M2 8h3l5-5v16l-5-5H2z" fill="none" stroke="#fff" stroke-width="1.200"/><path d="M13 8c1 2 1 4 0 6M16 6c2 3 2 7 0 10M18.500 4c3 4 3 10 0 14" fill="none" stroke="#fff" stroke-width="1.200"/></svg>
      <svg class="tr-bat" width="22" height="14" viewBox="0 0 22 14"><rect x="1" y="1" width="17" height="12" rx="2" fill="none" stroke="#fff" stroke-width="1.200"/><rect x="3" y="3" width="10" height="8" fill="#fff"/><rect x="19" y="5" width="2" height="4" fill="#fff"/></svg>
      <div class="clock"><span>10:23 PM</span><span>10/29/2021</span></div>
    </div>
  </div>
</div>
</body>
</html>
```
FILE: styles.css
```css
* { box-sizing: border-box; }
html, body { margin: 0; padding: 0; width: 1920px; height: 1080px; overflow: hidden; background: #fff; }
body { font-family: "Liberation Sans", Arial, sans-serif; color: #000; }
.defs { position: absolute; }
.app { width: 1920px; height: 1080px; display: flex; flex-direction: column; overflow: hidden; }

/* title + menu */
.titlebar { height: 30px; background: #fff; display: flex; align-items: center; padding-left: 3px; }
.app-icon { flex: none; }
.title-text { font-family: "Noto Sans", sans-serif; font-size: 14.100px; margin-left: 5px; color: #111; }
.winctl { margin-left: auto; display: flex; padding-right: 22px; gap: 38px; margin-top: -2px; }
.menubar { height: 22px; background: #fff; display: flex; align-items: center; gap: 18.500px; padding-left: 9px; font-family: "Noto Sans", sans-serif; font-size: 14px; color: #111; }

/* toolbars */
.toolrow { height: 37px; display: flex; background: #e8f0f7; }
.toolbar { display: flex; align-items: center; height: 37px; background: linear-gradient(#e9f2f9 0%, #dbe9f3 45%, #b0d0e6 100%); padding-left: 12px; position: relative; }
.toolbar::before { content: ""; position: absolute; left: 4px; top: 3px; bottom: 3px; border-left: 2px dotted #a8b8c4; }
.tb { width: 32px; height: 37px; display: flex; align-items: center; justify-content: center; flex: none; }
.tb.on { background-color: #d6e6f2; box-shadow: inset 0 0 0 1px #6fa0c0; height: 30px; }
.sep { width: 1px; height: 26px; background: #a5b3bd; margin: 0 3.500px; flex: none; }
.tb-a { width: 478px; margin-right: 4px; }
.tb-b { width: 286px; margin-right: 5px; }
.tb-b .tb { width: 32px; }
.tb-c { width: 453px; margin-right: 5px; padding-left: 9px; }
.tb-c .tb { width: 32.200px; }
.tb-d { width: 261px; padding-left: 11px; }
.ic-dollar { font: bold 17px "Liberation Sans", sans-serif; fill: #806800; }
.ic-bin { font: bold 11px "Liberation Mono", monospace; fill: #1a3ad0; }
.ic-bin-s { font: bold 7px "Liberation Mono", monospace; fill: #1a3ad0; }
.ic-help { font: bold 19px "Liberation Sans", sans-serif; fill: #fff; }
.ic-a { font: bold 12px "Liberation Sans", sans-serif; fill: #999; }

/* tabs */
.tabstrip { height: 34px; background: #e6edf5; display: flex; align-items: flex-end; }
.tab { position: relative; width: 218px; height: 30px; display: flex; align-items: center; }
.tab-shape { position: absolute; left: 0; top: -1px; }
.tab-icon { position: relative; margin-left: 25px; flex: none; }
.tab-text { position: relative; margin-left: 5px; font-size: 14px; font-weight: bold; letter-spacing: 0.200px; color: #35587e; white-space: nowrap; }
.tab-x { position: absolute; left: 190px; top: 8px; }
.tabline { height: 7px; background: #b3d2e7; border-top: 1px solid #7ba6c4; }

/* workspace */
.workspace { height: 853px; display: flex; background: #b7d5e9; }
.tools { width: 38px; flex: none; background: linear-gradient(90deg, #e6f2fa 0%, #d5e7f4 55%, #a6cbe4 100%); padding: 10.500px 4px 0 0; display: flex; flex-direction: column; align-items: center; position: relative; }
.tools::before { content: ""; position: absolute; left: 1px; right: 2px; top: 4px; border-top: 2px dotted #a8b8c4; }
.tool { width: 32px; height: 30px; flex: none; display: flex; align-items: center; justify-content: center; }
.tool.on { background: #d3e5f1; box-shadow: inset 0 0 0 1px #6fa0c0; }
.tool-sep { width: 32px; height: 1px; margin: 1.500px 0; border: 0; background: #a9a9a9; flex: none; }
.tool-gap { margin-top: 22px; }
.tool-a { font: 34px "Liberation Serif", serif; line-height: 30px; }
.ic-lbl { font: 12px "DejaVu Sans Mono", monospace; fill: #1a2ac0; }
.ic-s { font: 900 19px "Liberation Sans", sans-serif; stroke: #000; stroke-width: 0.800px; fill: #000; }
.angle { width: 32px; height: 19px; flex: none; background: #fff; border: 1px solid #8a8a8a; font-size: 12px; line-height: 17px; padding-left: 1px; margin: 2px 0 5px; color: #222; }

.sidepanel { width: 120px; flex: none; display: flex; flex-direction: column; }
.overview { height: 101px; background: #e0e0d0; border: 2px solid #707070; flex: none; }
.overview svg { display: block; }
.ov-ink { fill: none; stroke: #000; stroke-width: 1; }
.ov-ink .thick { stroke-width: 1.600; }
.ov-ink .dash { stroke-dasharray: 3 2; }
.ov-blue { fill: none; stroke: #0000c0; stroke-width: 1; }
.ov-green { fill: none; stroke: #00c000; stroke-width: 1; }
.devhead { margin-top: 4px; height: 24px; padding-bottom: 1px; background: linear-gradient(#f2f8fc, #b9d6ea); display: flex; align-items: center; padding-left: 3px; flex: none; border-top: 1px solid #90b0c8; }
.pill { width: 15px; height: 16px; border-radius: 3px; background: #0a5fdc; color: #fff; font-size: 13px; font-weight: bold; text-align: center; line-height: 16px; margin-right: 6px; }
.devtitle { font-size: 13px; color: #1c2a4e; margin-left: 8px; }
.devlist { list-style: none; margin: 0; padding: 1px 0 0; flex: 1; background: #fff; border: 2px solid #2a6eaa; border-top-width: 1px; font-size: 13px; line-height: 16px; color: #000; }
.devlist li { height: 16px; padding-left: 2px; }
.devlist .sel { background: #0078d7; color: #fff; }

.canvas-wrap { margin-left: 5px; width: 1752px; flex: none; border: solid #666; border-width: 2px 0 0 2px; overflow: hidden; }
.canvas { display: block; }

/* schematic */
.wire { fill: none; stroke: #004000; stroke-width: 3; }
.pin { fill: none; stroke: #800000; stroke-width: 3; }
.body { fill: #c8c8a8; stroke: #800000; stroke-width: 3; }
.res { fill: #c8c8a8; stroke: #800000; stroke-width: 3; }
.bubble { fill: #e0e0d0; stroke: #800000; stroke-width: 3; }
.node { fill: #004000; }
.frame { fill: none; stroke: #0000c0; stroke-width: 1.200; }
.lbl, .lbl text { font: 14px "Liberation Sans", sans-serif; fill: #1a1a1a; }
.lbl.end text { text-anchor: end; }
.lbl-big, .lbl-big text { font: 21px "Liberation Sans", sans-serif; fill: #111; }
.tp .r { fill: #ff4040; }
.tp .b { fill: #4040ff; }
.ls-b { fill: #0000c0; stroke: #000090; stroke-width: 3; }
.ls-r { fill: #c00000; stroke: #800000; stroke-width: 3; }
.ls-t text { font: bold 25px "Liberation Sans", sans-serif; fill: #c8c8c8; text-anchor: middle; }
.tog { fill: #400000; stroke: #f00000; stroke-width: 1.500; }
.togarr { fill: none; stroke: #ff3030; stroke-width: 1; }
.led-on { fill: #c000c0; stroke: #800000; stroke-width: 3; }
.led-off { fill: #000; stroke: #800000; stroke-width: 3; }
.diode { fill: none; stroke: #800000; stroke-width: 3; }
.cursor-d { fill: none; stroke: #0000e0; stroke-width: 1; stroke-dasharray: 1.500 1; }
.cursor-c { fill: none; stroke: #0000e0; stroke-width: 1; }

/* status */
.statusbar { height: 37px; display: flex; background: #dbe9f3; }
.stat-seg { height: 37px; padding-top: 2px; background: linear-gradient(#e9f2f9 0%, #dbe9f3 45%, #b0d0e6 100%); display: flex; align-items: center; position: relative; flex: none; font-size: 13px; white-space: nowrap; }
.stat-seg::before { content: ""; position: absolute; left: 4px; top: 3px; bottom: 3px; border-left: 2px dotted #a8b8c4; }
.seg-play { width: 318px; padding-left: 21px; margin-right: 8px; }
.seg-play svg { flex: none; margin-right: 18px; }
.seg-play svg:last-of-type { margin-right: 5px; }
.seg-play svg:nth-of-type(2) { margin-right: 21px; }
.seg-play svg:nth-of-type(3) { margin-right: 22px; }
.seg-play svg:nth-of-type(4) { margin-right: 13px; }
.stat-sep { width: 1px; height: 28px; background: #9fb0bc; margin-right: 12px; flex: none; }
.msgs { color: #000; font-size: 13.500px; letter-spacing: 0.100px; }
.seg-anim { width: 415px; padding-left: 11px; margin-right: 5px; }
.anim { color: #143a10; font-size: 13px; letter-spacing: -0.200px; }
.seg-coord { flex: 1; padding-left: 9px; color: #111; font-size: 12.500px; overflow: hidden; }
.c-x { width: 29px; }
.c-xv { width: 49px; }
.c-y { width: 35px; }
.c-th { margin-left: auto; color: #2010c0; font-size: 13px; width: 11px; }

/* taskbar */
.taskbar { height: 60px; display: flex; align-items: center; position: relative; background: linear-gradient(90deg, #1b212c 0%, #1b212c 17%, #10225f 29%, #12235f 60%, #1b212d 73%, #1b212d 100%); }
.task-icons { display: flex; margin-left: 560.500px; align-items: center; }
.ti { width: 30px; height: 30px; margin-right: 25px; display: flex; align-items: center; justify-content: center; position: relative; flex: none; }
.ti-run::after { content: ""; position: absolute; left: 12px; bottom: -11px; width: 6px; height: 4px; border-radius: 2px; background: #9aa4b4; }
.ti-act::before { content: ""; position: absolute; left: -9px; top: -10px; width: 48px; height: 50px; border-radius: 5px; background: #1d2a55; box-shadow: 2px 0 0 #1a2240; }
.ti-act svg { position: relative; }
.ti-act::after { content: ""; position: absolute; left: 5px; bottom: -11px; width: 20px; height: 4px; border-radius: 2px; background: #4cc2ff; }
.ti-dim::after { content: ""; position: absolute; left: 0; bottom: -11px; width: 30px; height: 4px; border-radius: 2px; background: #2c3446; }
.ic-w { font: 15px "Liberation Sans", sans-serif; fill: #e8eef8; }
.ic-word { font: bold 12px "Liberation Sans", sans-serif; fill: #fff; }
.tray { margin-left: auto; display: flex; align-items: center; padding-right: 23px; color: #fff; font-family: "Noto Sans", sans-serif; }
.tray svg { flex: none; }
.tr-c { margin-left: 14px; }
.tr-cloud { margin-left: 11px; }
.tr-eng { font-size: 13.500px; margin-left: 19px; width: 40px; }
.tr-globe { margin-left: 11px; }
.tr-spk { margin-left: 8px; }
.tr-bat { margin-left: 7px; }
.clock { margin-left: 16px; display: flex; flex-direction: column; align-items: flex-end; font-size: 13.800px; line-height: 20px; }
```
